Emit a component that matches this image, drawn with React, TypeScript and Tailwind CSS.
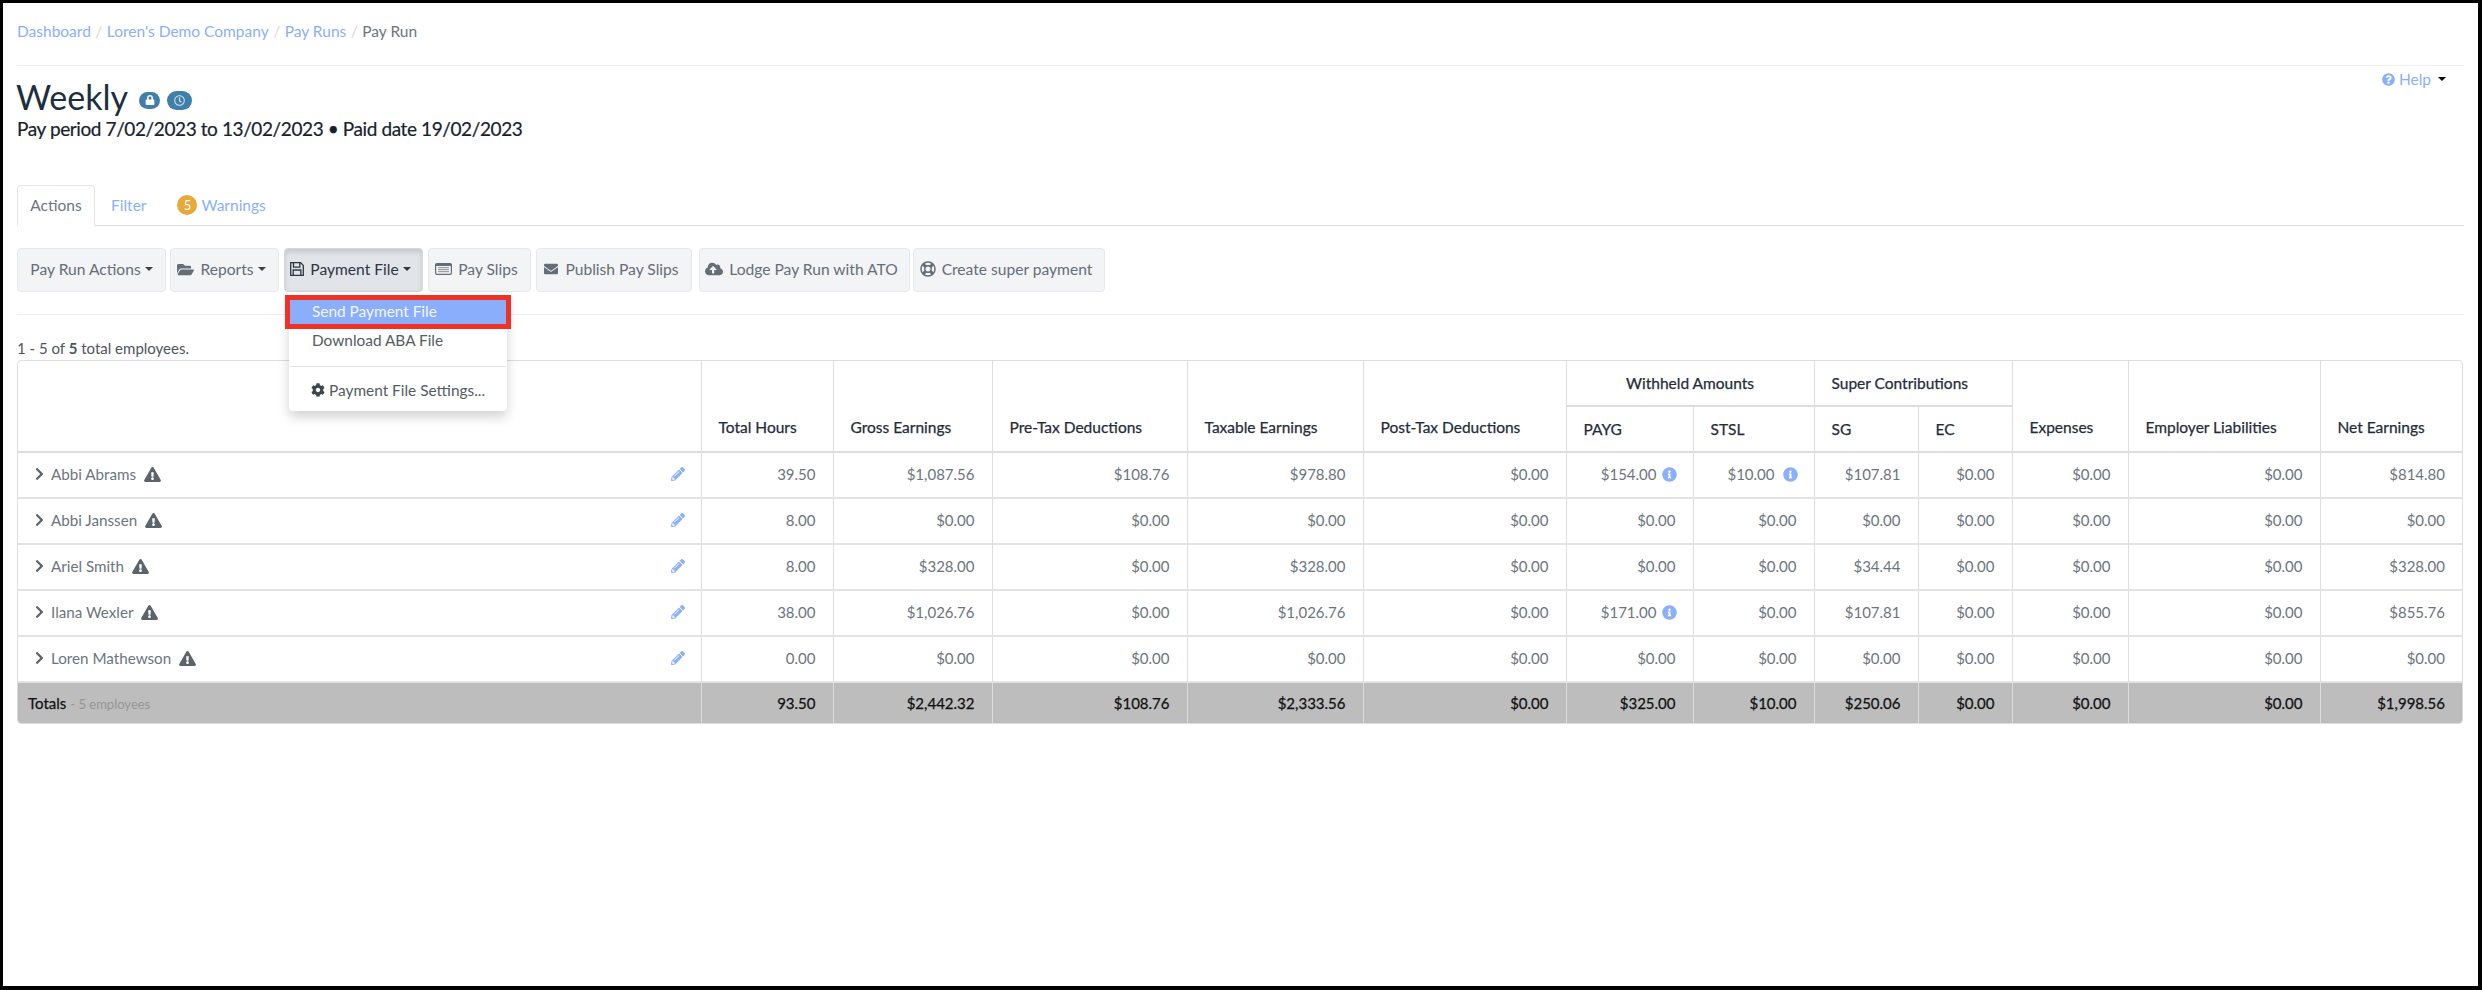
import React from "react";
import {
  FaChevronRight,
  FaCloudUploadAlt,
  FaCog,
  FaEnvelope,
  FaExclamationTriangle,
  FaFolderOpen,
  FaInfoCircle,
  FaLock,
  FaPencilAlt,
  FaQuestionCircle,
  FaRegClock,
  FaRegLifeRing,
} from "react-icons/fa";

type Row = {
  name: string;
  values: string[];
  info?: number[];
};

const rows: Row[] = [
  {
    name: "Abbi Abrams",
    values: ["39.50", "$1,087.56", "$108.76", "$978.80", "$0.00", "$154.00", "$10.00", "$107.81", "$0.00", "$0.00", "$0.00", "$814.80"],
    info: [5, 6],
  },
  {
    name: "Abbi Janssen",
    values: ["8.00", "$0.00", "$0.00", "$0.00", "$0.00", "$0.00", "$0.00", "$0.00", "$0.00", "$0.00", "$0.00", "$0.00"],
  },
  {
    name: "Ariel Smith",
    values: ["8.00", "$328.00", "$0.00", "$328.00", "$0.00", "$0.00", "$0.00", "$34.44", "$0.00", "$0.00", "$0.00", "$328.00"],
  },
  {
    name: "Ilana Wexler",
    values: ["38.00", "$1,026.76", "$0.00", "$1,026.76", "$0.00", "$171.00", "$0.00", "$107.81", "$0.00", "$0.00", "$0.00", "$855.76"],
    info: [5],
  },
  {
    name: "Loren Mathewson",
    values: ["0.00", "$0.00", "$0.00", "$0.00", "$0.00", "$0.00", "$0.00", "$0.00", "$0.00", "$0.00", "$0.00", "$0.00"],
  },
];

const totals = ["93.50", "$2,442.32", "$108.76", "$2,333.56", "$0.00", "$325.00", "$10.00", "$250.06", "$0.00", "$0.00", "$0.00", "$1,998.56"];

const th = "border-r border-b-2 border-[#dddddd] px-[17px] text-left align-middle text-[15.5px] font-normal text-[#1f2d3a] [-webkit-text-stroke:0.25px]";

const Caret = ({ className }: { className: string }) => (
  <span className={`h-0 w-0 border-x-[4px] border-t-[4px] border-x-transparent ${className}`} />
);

// fa-floppy-o, not in the FA5 set the same way
const SaveIcon = () => (
  <svg viewBox="0 0 14 14" className="h-[14px] w-[14px]" fill="none" stroke="currentColor" strokeWidth="1.3">
    <path d="M0.7 0.7H10.6L13.3 3.4V13.3H0.7Z" />
    <path d="M3.5 0.7V5.2H9.8V0.7" />
    <path d="M3.2 13.3V8H10.8V13.3" />
  </svg>
);

const ListIcon = () => (
  <svg viewBox="0 0 17 12" className="h-[12px] w-[17px]" fill="none" stroke="currentColor">
    <rect x="0.6" y="0.6" width="15.8" height="10.8" rx="1.2" strokeWidth="1.2" />
    <path d="M0.6 2H16.4" strokeWidth="2" />
    <path d="M3 4.7H14M3 6.7H14M3 8.7H14" strokeWidth="1" opacity="0.75" />
  </svg>
);

const ToolButton = ({ icon, label, caret, className }: { icon?: React.ReactNode; label: string; caret?: boolean; className: string }) => (
  <button className={`flex h-[44px] items-center justify-center gap-[6px] rounded-[4px] border border-[#e6e8eb] bg-[#f3f4f6] pb-[2px] text-[15.6px] text-[#646e79] ${className}`}>
    {icon}
    <span>{label}</span>
    {caret && <Caret className="-ml-[2px] border-t-[#3a434c]" />}
  </button>
);

export default function App() {
  return (
    <div className="h-[990px] w-full border-t-[3px] border-r-4 border-b-4 border-l-[3px] border-black bg-white px-[14px] font-['Lato',sans-serif] text-[15px] leading-5 text-[#6b7580]">
      <div className="flex items-center gap-[4.5px] pt-[18px] pb-[24px] text-[15.5px]">
        <a className="text-[#8bb0fb]">Dashboard</a>
        <span className="text-[#d5d8dc]">/</span>
        <a className="text-[#8bb0fb]">Loren's Demo Company</a>
        <span className="text-[#d5d8dc]">/</span>
        <a className="text-[#8bb0fb]">Pay Runs</a>
        <span className="text-[#d5d8dc]">/</span>
        <span>Pay Run</span>
      </div>
      <div className="border-t border-[#eeeeee]" />

      <div className="flex items-start justify-between">
        <div>
          <div className="mt-[11px] flex items-center">
            <h1 className="-ml-[1px] text-[34px] leading-10 text-[#1d2e3e]">Weekly</h1>
            <span className="mt-[6px] ml-[11px] flex h-[17px] w-[21px] items-center justify-center rounded-full bg-[#3f7fa8]">
              <FaLock className="h-[10px] w-[10px] text-white" />
            </span>
            <span className="mt-[6px] ml-[7px] flex h-[19px] w-[25px] items-center justify-center rounded-full bg-[#3f7fa8]">
              <FaRegClock className="h-[11px] w-[11px] text-[#cfe0ea]" />
            </span>
          </div>
          <div className="text-[19px] leading-6 tracking-[-0.4px] text-[#16222e] [-webkit-text-stroke:0.2px]">Pay period 7/02/2023 to 13/02/2023 • Paid date 19/02/2023</div>
        </div>
        <div className="mt-[3px] mr-[18px] flex items-center text-[15.5px] text-[#8bb0fb]">
          <FaQuestionCircle className="mr-[4px] h-[13px] w-[13px]" />
          <span>Help</span>
          <Caret className="ml-[7px] border-t-black" />
        </div>
      </div>

      <div className="mt-[44px] flex h-[41px] border-b border-[#dddddd] text-[15.5px]">
        <div className="flex h-[41px] w-[78px] items-center justify-center rounded-t-[4px] border border-b-white border-[#e3e3e3] bg-white pb-[1px]">Actions</div>
        <div className="ml-[16px] flex items-center pb-[1px] text-[#8bb0fb]">Filter</div>
        <div className="ml-[31px] flex items-center pb-[1px] text-[#8bb0fb]">
          <span className="mr-[4px] flex h-[20px] w-[20px] items-center justify-center rounded-full bg-[#e8a83a] text-[13px] text-white">5</span>
          Warnings
        </div>
      </div>

      <div className="mt-[22px] flex">
        <ToolButton className="w-[149px]" label="Pay Run Actions" caret />
        <ToolButton className="ml-[4px] w-[109px] pr-[6px]" icon={<FaFolderOpen className="h-[15px] w-[17px]" />} label="Reports" caret />
        <div className="relative ml-[5px]">
          <button className="flex h-[44px] w-[139px] items-center justify-center gap-[6px] rounded-[4px] border border-[#d4d7db] bg-[#e1e4e8] pr-[6px] pb-[2px] text-[15.6px] text-[#2e3740] shadow-[inset_0_3px_5px_rgba(0,0,0,0.125)]">
            <SaveIcon />
            <span>Payment File</span>
            <Caret className="-ml-[2px] border-t-[#2e3740]" />
          </button>
          <div className="absolute top-[44px] left-[5px] z-10 h-[119px] w-[218px] rounded-[4px] bg-white pt-[3px] text-[15.4px] shadow-[0_6px_12px_rgba(0,0,0,0.175)]">
            <div className="-mx-[4px] flex h-[34px] items-center border-[5px] border-[#f03226] bg-[#8aaefb] pb-[2px] pl-[22px] text-[#f2f5ff]">Send Payment File</div>
            <div className="flex h-[22px] items-center pl-[23px] text-[#545c64]">Download ABA File</div>
            <div className="mx-[1px] mt-[15px] border-t border-[#e5e5e5]" />
            <div className="mt-[13px] flex items-center pl-[22px] text-[#545c64]">
              <FaCog className="mr-[4px] h-[14px] w-[14px] text-[#3d454d]" />
              Payment File Settings...
            </div>
          </div>
        </div>
        <ToolButton className="ml-[5px] w-[103px] pr-[6px]" icon={<ListIcon />} label="Pay Slips" />
        <ToolButton className="ml-[5px] w-[156px] pr-[6px]" icon={<FaEnvelope className="h-[14px] w-[16px]" />} label="Publish Pay Slips" />
        <ToolButton className="ml-[7px] w-[211px] pr-[6px]" icon={<FaCloudUploadAlt className="h-[16px] w-[18px]" />} label="Lodge Pay Run with ATO" />
        <ToolButton className="ml-[3px] w-[192px] pr-[6px]" icon={<FaRegLifeRing className="h-[16px] w-[16px]" />} label="Create super payment" />
      </div>

      <div className="mt-[22px] border-t border-[#eeeeee]" />
      <div className="mt-[23px] text-[15px] text-[#4c555e]">
        1 - 5 of <b>5</b> total employees.
      </div>

      <div className="mt-[2px] w-[2446px] overflow-hidden rounded-[4px] border border-[#dddddd]">
        <table className="w-full table-fixed border-collapse">
          <colgroup>
            <col className="w-[683px]" />
            <col className="w-[132px]" />
            <col className="w-[159px]" />
            <col className="w-[195px]" />
            <col className="w-[176px]" />
            <col className="w-[203px]" />
            <col className="w-[127px]" />
            <col className="w-[121px]" />
            <col className="w-[104px]" />
            <col className="w-[94px]" />
            <col className="w-[116px]" />
            <col className="w-[192px]" />
            <col className="w-[142px]" />
          </colgroup>
          <thead>
            <tr className="h-[45px]">
              <th rowSpan={2} className={th}></th>
              <th rowSpan={2} className={`${th} !align-bottom pb-[14px]`}>Total Hours</th>
              <th rowSpan={2} className={`${th} !align-bottom pb-[14px]`}>Gross Earnings</th>
              <th rowSpan={2} className={`${th} !align-bottom pb-[14px]`}>Pre-Tax Deductions</th>
              <th rowSpan={2} className={`${th} !align-bottom pb-[14px]`}>Taxable Earnings</th>
              <th rowSpan={2} className={`${th} !align-bottom pb-[14px]`}>Post-Tax Deductions</th>
              <th colSpan={2} className={`${th} !text-center`}>Withheld Amounts</th>
              <th colSpan={2} className={th}>Super Contributions</th>
              <th rowSpan={2} className={`${th} !align-bottom pb-[14px]`}>Expenses</th>
              <th rowSpan={2} className={`${th} !align-bottom pb-[14px]`}>Employer Liabilities</th>
              <th rowSpan={2} className={`${th} !border-r-0 !align-bottom pb-[14px]`}>Net Earnings</th>
            </tr>
            <tr className="h-[46px]">
              <th className={th}>PAYG</th>
              <th className={th}>STSL</th>
              <th className={th}>SG</th>
              <th className={th}>EC</th>
            </tr>
          </thead>
          <tbody>
            {rows.map((row) => (
              <tr key={row.name} className="h-[46px] border-b-2 border-[#e3e3e3]">
                <td className="border-r border-[#dddddd] pr-[16px] pb-[2px] pl-[16px]">
                  <div className="flex items-center">
                    <FaChevronRight className="h-[14px] w-[11px] text-[#5b646d]" />
                    <span className="ml-[6px] text-[15.2px]">{row.name}</span>
                    <FaExclamationTriangle className="ml-[8px] h-[15px] w-[17px] text-[#5b646d]" />
                    <FaPencilAlt className="ml-auto h-[14px] w-[14px] text-[#8bb0fb]" />
                  </div>
                </td>
                {row.values.map((v, i) => (
                  <td key={i} className="border-r border-[#dddddd] px-[17px] pb-[2px] text-right last:border-r-0">
                    {row.info?.includes(i) ? (
                      <span className="-mr-[1px] inline-flex items-center">
                        {v}
                        <FaInfoCircle className={`h-[15px] w-[15px] text-[#8bb0fb] ${v === "$10.00" ? "ml-[8px]" : "ml-[5px]"}`} />
                      </span>
                    ) : (
                      v
                    )}
                  </td>
                ))}
              </tr>
            ))}
            <tr className="h-[41px] bg-[#bdbdbd] text-[#111111]">
              <td className="border-r border-[#dddddd] pl-[10px]">
                <span className="[-webkit-text-stroke:0.25px]">Totals</span>
                <span className="ml-[4px] text-[13px] text-[#969696]">- 5 employees</span>
              </td>
              {totals.map((v, i) => (
                <td key={i} className="border-r border-[#dddddd] px-[17px] text-right [-webkit-text-stroke:0.25px] last:border-r-0">
                  {v}
                </td>
              ))}
            </tr>
          </tbody>
        </table>
      </div>
    </div>
  );
}
